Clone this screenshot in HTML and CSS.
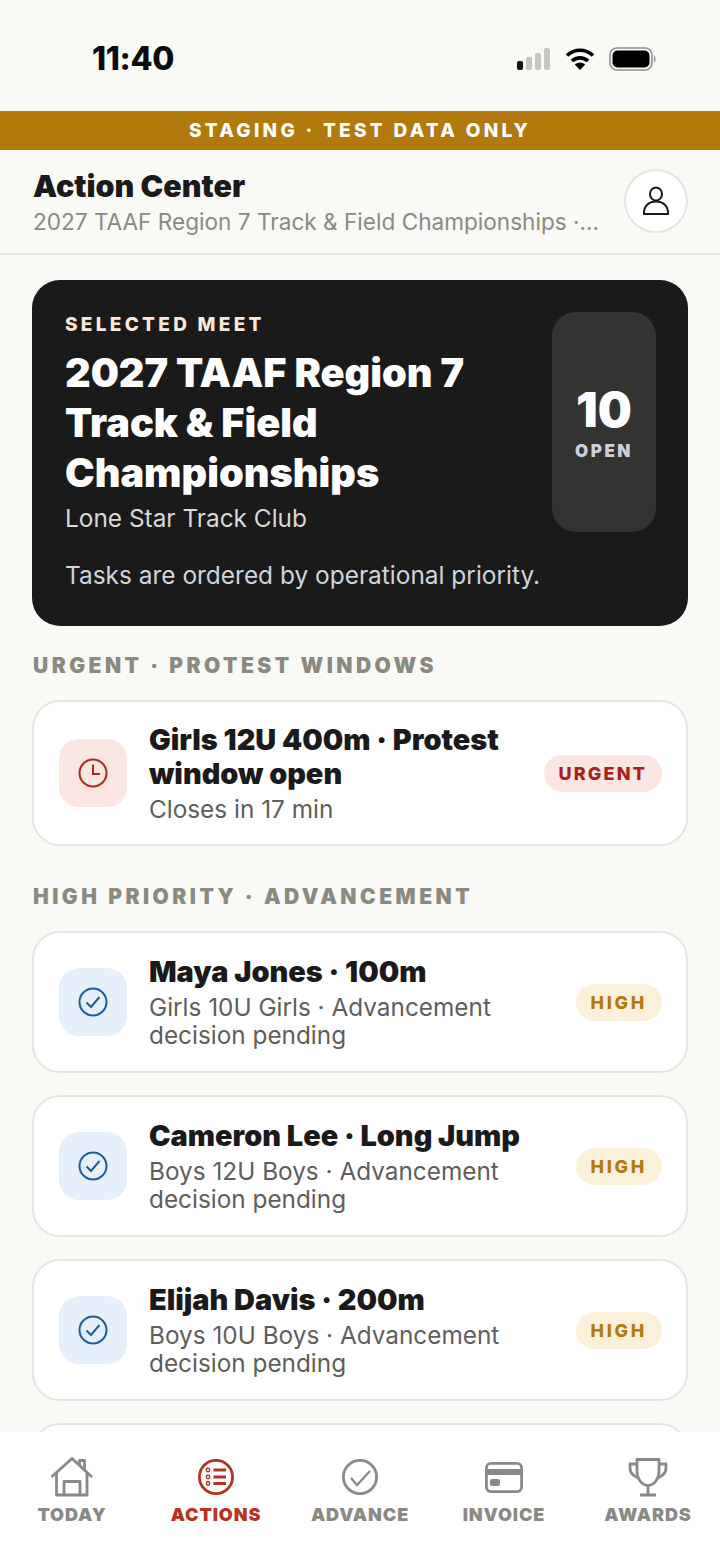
FILE: index.html
```html
<!DOCTYPE html>
<html lang="en">
<head>
    <meta charset="UTF-8">
    <meta name="viewport" content="width=device-width, initial-scale=1.0">
    <title>Action Center</title>
    <link rel="stylesheet" href="styles.css">
</head>
<body>
    <div class="app">
        <div class="status-bar">
            <span class="time">11:40</span>
            <div class="status-icons">
                <svg class="signal" width="34" height="24" viewBox="0 0 34 24">
                    <rect x="0" y="14" width="6" height="9" rx="2" fill="#111"/>
                    <rect x="9" y="10" width="6" height="13" rx="2" fill="#c6c6c2"/>
                    <rect x="18" y="6" width="6" height="17" rx="2" fill="#c6c6c2"/>
                    <rect x="27" y="1" width="6" height="22" rx="2" fill="#c6c6c2"/>
                </svg>
                <svg class="wifi" width="30" height="24" viewBox="0 0 30 24">
                    <path d="M2 8.500C9.500 1.500 20.500 1.500 28 8.500" fill="none" stroke="#000" stroke-width="3.600"/>
                    <path d="M7 14C11.500 9.800 18.500 9.800 23 14" fill="none" stroke="#000" stroke-width="3.600"/>
                    <path d="M9.800 17.600C12.800 14.800 17.200 14.800 20.200 17.600L15 23Z" fill="#000"/>
                </svg>
                <svg class="battery" width="48" height="24" viewBox="0 0 48 24">
                    <rect x="1" y="1" width="42" height="22" rx="7" fill="none" stroke="#8f8f8c" stroke-width="1.600"/>
                    <rect x="3.500" y="3.500" width="37" height="17" rx="5" fill="#000"/>
                    <path d="M45 8.500C47 9.500 47 14.500 45 15.500Z" fill="#8f8f8c"/>
                </svg>
            </div>
        </div>

        <div class="staging">STAGING · TEST DATA ONLY</div>

        <header class="header">
            <div class="header-text">
                <h1>Action Center</h1>
                <p>2027 TAAF Region 7 Track &amp; Field Championships ·...</p>
            </div>
            <div class="avatar">
                <svg width="30" height="30" viewBox="0 0 30 30" fill="none" stroke="#1a1a1a" stroke-width="2">
                    <ellipse cx="15" cy="8" rx="6" ry="6.500"/>
                    <path d="M3 28H27C27.500 20 22 15.500 15 15.500C8 15.500 2.500 20 3 28Z"/>
                </svg>
            </div>
        </header>

        <main class="content">
            <section class="meet">
                <div class="meet-info">
                    <div class="meet-label">SELECTED MEET</div>
                    <h2>2027 TAAF Region 7 Track &amp; Field Championships</h2>
                    <div class="meet-club">Lone Star Track Club</div>
                </div>
                <div class="meet-count">
                    <strong>10</strong>
                    <span>OPEN</span>
                </div>
                <p class="meet-note">Tasks are ordered by operational priority.</p>
            </section>

            <h3 class="section-label">URGENT · PROTEST WINDOWS</h3>
            <div class="card">
                <div class="card-icon icon-red">
                    <svg width="32" height="32" viewBox="0 0 32 32" fill="none" stroke="#b3261e" stroke-width="2">
                        <circle cx="16" cy="16" r="13.500"/>
                        <path d="M16 7.500V17H23"/>
                    </svg>
                </div>
                <div class="card-text">
                    <div class="card-title">Girls 12U 400m · Protest window open</div>
                    <div class="card-sub">Closes in 17 min</div>
                </div>
                <span class="badge badge-urgent">URGENT</span>
            </div>

            <h3 class="section-label section-gap">HIGH PRIORITY · ADVANCEMENT</h3>
            <div class="card">
                <div class="card-icon icon-blue">
                    <svg width="32" height="32" viewBox="0 0 32 32" fill="none" stroke="#1f5c9e" stroke-width="2">
                        <circle cx="16" cy="16" r="13.500"/>
                        <path d="M9.500 16.500L14 21L22.500 11"/>
                    </svg>
                </div>
                <div class="card-text">
                    <div class="card-title">Maya Jones · 100m</div>
                    <div class="card-sub">Girls 10U Girls · Advancement decision pending</div>
                </div>
                <span class="badge badge-high">HIGH</span>
            </div>
            <div class="card">
                <div class="card-icon icon-blue">
                    <svg width="32" height="32" viewBox="0 0 32 32" fill="none" stroke="#1f5c9e" stroke-width="2">
                        <circle cx="16" cy="16" r="13.500"/>
                        <path d="M9.500 16.500L14 21L22.500 11"/>
                    </svg>
                </div>
                <div class="card-text">
                    <div class="card-title">Cameron Lee · Long Jump</div>
                    <div class="card-sub">Boys 12U Boys · Advancement decision pending</div>
                </div>
                <span class="badge badge-high">HIGH</span>
            </div>
            <div class="card">
                <div class="card-icon icon-blue">
                    <svg width="32" height="32" viewBox="0 0 32 32" fill="none" stroke="#1f5c9e" stroke-width="2">
                        <circle cx="16" cy="16" r="13.500"/>
                        <path d="M9.500 16.500L14 21L22.500 11"/>
                    </svg>
                </div>
                <div class="card-text">
                    <div class="card-title">Elijah Davis · 200m</div>
                    <div class="card-sub">Boys 10U Boys · Advancement decision pending</div>
                </div>
                <span class="badge badge-high">HIGH</span>
            </div>
            <div class="card"></div>
        </main>

        <nav class="tabs">
            <div class="tab">
                <svg width="44" height="40" viewBox="0 0 44 40" fill="none" stroke="#8a8a84" stroke-width="2.800" stroke-linejoin="round">
                    <path d="M1.500 20L22 1.500L42 20"/>
                    <path d="M29.500 9V3.500H34.500V13"/>
                    <path d="M6.500 16V38H37V16"/>
                    <path d="M14 38V24.500H30V38"/>
                </svg>
                <span>TODAY</span>
            </div>
            <div class="tab active">
                <svg width="38" height="38" viewBox="0 0 38 40" fill="none" stroke="#b8321f" stroke-width="2.800">
                    <circle cx="19" cy="20" r="16.600"/>
                    <path d="M16.500 13H29M16.500 20H29M16.500 26.500H29" stroke-width="2.800"/>
                    <circle cx="11" cy="13" r="1.700" stroke-width="1.400"/>
                    <circle cx="11" cy="20" r="1.700" stroke-width="1.400"/>
                    <circle cx="11" cy="26.500" r="1.700" stroke-width="1.400"/>
                </svg>
                <span>ACTIONS</span>
            </div>
            <div class="tab">
                <svg width="38" height="38" viewBox="0 0 38 40" fill="none" stroke="#8a8a84" stroke-width="2.800">
                    <circle cx="19" cy="20" r="16.600"/>
                    <path d="M10 21L16 28L29 14" stroke-width="2.200"/>
                </svg>
                <span>ADVANCE</span>
            </div>
            <div class="tab">
                <svg width="42" height="36" viewBox="0 0 42 40" fill="none" stroke="#8a8a84" stroke-width="2.800">
                    <rect x="3.400" y="6.400" width="35.200" height="28.200" rx="4.500"/>
                    <path d="M3.400 15H38.600" stroke-width="6"/>
                    <rect x="7" y="22" width="10" height="7" rx="2" fill="#8a8a84" stroke="none"/>
                </svg>
                <span>INVOICE</span>
            </div>
            <div class="tab">
                <svg width="42" height="40" viewBox="0 0 42 40" fill="none" stroke="#8a8a84" stroke-width="2.800" stroke-linejoin="round">
                    <path d="M10 2.500H32V14C32 22 27 28.500 21 28.500C15 28.500 10 22 10 14Z"/>
                    <path d="M10 7H3V11C3 15 6 19 11.500 21"/>
                    <path d="M32 7H39V11C39 15 36 19 30.500 21"/>
                    <path d="M21 28.500V38M13 38H29"/>
                </svg>
                <span>AWARDS</span>
            </div>
        </nav>
    </div>
</body>
</html>
```

FILE: styles.css
```css
* {
    box-sizing: border-box;
}
html, body {
    margin: 0;
    padding: 0;
}
body {
    font-family: Inter, "Liberation Sans", sans-serif;
    background-color: #f9f9f5;
    color: #1a1a1a;
}
.app {
    display: flex;
    flex-direction: column;
    width: 720px;
    height: 1567px;
    overflow: hidden;
}
.status-bar {
    display: flex;
    justify-content: space-between;
    align-items: center;
    height: 111px;
    padding: 6px 63px 0 92px;
    flex-shrink: 0;
}
.time {
    font-size: 32px;
    font-weight: 800;
    letter-spacing: -0.01em;
    color: #0a0a0a;
}
.status-icons {
    display: flex;
    align-items: center;
    gap: 14px;
}
.staging {
    height: 39px;
    line-height: 39px;
    flex-shrink: 0;
    background-color: #b27a0c;
    color: #fff;
    font-size: 19px;
    font-weight: 800;
    letter-spacing: 3.3px;
    text-align: center;
}
.header {
    display: flex;
    justify-content: space-between;
    align-items: center;
    height: 105px;
    padding: 0 32px 2px 33px;
    flex-shrink: 0;
    border-bottom: 2px solid #e6e5e0;
}
.header-text {
    padding-top: 6px;
}
.header h1 {
    margin: 0;
    font-size: 30.5px;
    line-height: 36px;
    font-weight: 900;
}
.header p {
    margin: 0;
    font-size: 22.6px;
    line-height: 36px;
    color: #8a8a84;
    white-space: nowrap;
}
.avatar {
    display: flex;
    align-items: center;
    justify-content: center;
    width: 64px;
    height: 64px;
    border-radius: 50%;
    background: #fff;
    border: 2px solid #e6e5e0;
}
.content {
    flex: 1;
    min-height: 0;
    overflow: hidden;
    padding: 25px 32px 0;
}
.meet {
    display: grid;
    grid-template-columns: 1fr 104px;
    column-gap: 20px;
    height: 346px;
    padding: 32px 32px 32px 33px;
    background-color: #1a1a1a;
    border-radius: 28px;
    color: #fff;
}
.meet-label {
    margin-top: 1px;
    font-size: 19px;
    line-height: 24px;
    font-weight: 800;
    letter-spacing: 3.3px;
    color: #fbe6d8;
}
.meet h2 {
    margin: 11px 0 0;
    font-size: 39.7px;
    line-height: 50px;
    font-weight: 900;
}
.meet-club {
    margin-top: 5px;
    font-size: 24.4px;
    line-height: 30px;
    color: #d8d8d6;
}
.meet-count {
    display: flex;
    flex-direction: column;
    align-items: center;
    justify-content: center;
    height: 220px;
    background-color: #333331;
    border-radius: 24px;
}
.meet-count strong {
    margin-top: 4px;
    font-size: 48px;
    line-height: 50px;
    font-weight: 900;
}
.meet-count span {
    margin-top: 4px;
    font-size: 17px;
    line-height: 24px;
    font-weight: 900;
    letter-spacing: 0.15em;
    color: #cdd0dc;
}
.meet-note {
    grid-column: 1 / 3;
    margin: 23px 0 0;
    font-size: 24.45px;
    line-height: 32px;
    color: #cfd3dc;
}
.section-label {
    margin: 26px 0 20px 1px;
    font-size: 21px;
    line-height: 28px;
    font-weight: 900;
    letter-spacing: 3.5px;
    color: #8a8a80;
}
.section-gap {
    margin-top: 37px;
}
.card {
    display: flex;
    align-items: center;
    min-height: 142px;
    margin-bottom: 22px;
    padding: 21px 24px 21px 25px;
    background: #fff;
    border: 2px solid #e6e5e0;
    border-radius: 28px;
}
.card-icon {
    display: flex;
    align-items: center;
    justify-content: center;
    width: 68px;
    height: 68px;
    flex-shrink: 0;
    border-radius: 20px;
}
.icon-red {
    background-color: #fbe6e3;
}
.icon-blue {
    background-color: #e6f0fb;
}
.card-text {
    flex: 1;
    min-width: 0;
    padding: 0 20px 0 22px;
}
.card-title {
    font-size: 28.9px;
    line-height: 34px;
    font-weight: 900;
}
.card-sub {
    margin-top: 4px;
    font-size: 24.35px;
    line-height: 28px;
    color: #5e5e5a;
}
.badge {
    flex-shrink: 0;
    height: 37px;
    line-height: 37px;
    padding: 0 15px;
    border-radius: 19px;
    font-size: 18px;
    font-weight: 800;
    letter-spacing: 0.12em;
}
.badge-urgent {
    background-color: #fbe6e3;
    color: #a8201a;
}
.badge-high {
    background-color: #fbf0da;
    color: #b27a0c;
    letter-spacing: 0.15em;
}
.tabs {
    display: flex;
    height: 135px;
    flex-shrink: 0;
    padding-top: 25px;
    background: #fff;
}
.tab {
    display: flex;
    flex-direction: column;
    align-items: center;
    width: 144px;
}
.tab svg {
    height: 40px;
}
.tab span {
    margin-top: 6px;
    font-size: 18px;
    line-height: 24px;
    font-weight: 900;
    letter-spacing: 0.05em;
    color: #8a8a84;
}
.tab.active span {
    color: #b8321f;
}
```
